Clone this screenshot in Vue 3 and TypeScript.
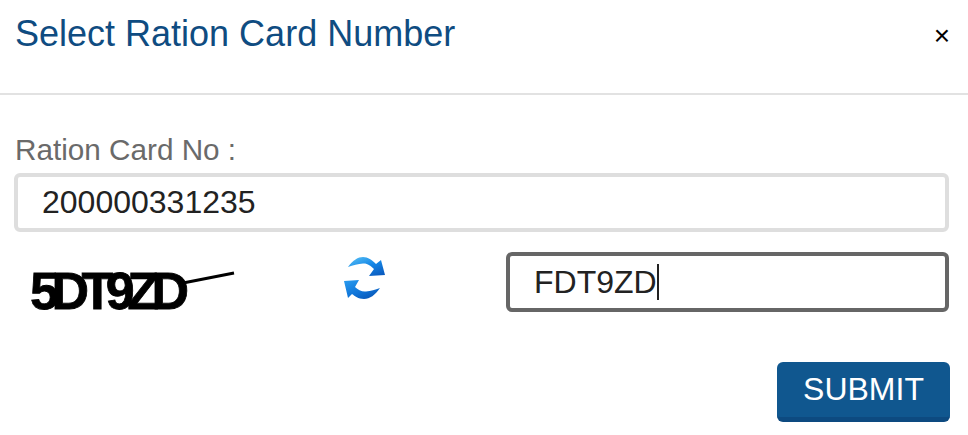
<template>
  <div class="modal">
    <header class="modal-header">
      <h4 class="modal-title">Select Ration Card Number</h4>
      <button class="close-btn" type="button">×</button>
    </header>
    <div class="modal-body">
      <label class="field-label">Ration Card No :</label>
      <div class="text-box">{{ cardNo }}</div>
      <div class="captcha-row">
        <div class="captcha">
          <span class="captcha-text">{{ captcha }}</span>
          <svg class="captcha-line" width="54" height="16" viewBox="0 0 54 16">
            <path d="M1 13 L52 3" stroke="#000" stroke-width="3" fill="none" />
          </svg>
        </div>
        <div class="refresh">
          <svg width="42" height="44" viewBox="-1 -1 42 44">
            <defs>
              <linearGradient id="arrowTop" x1="0" y1="0" x2="0.8" y2="1">
                <stop offset="0" stop-color="#5cc4f7" />
                <stop offset="0.55" stop-color="#1486e6" />
                <stop offset="1" stop-color="#0b5cc0" />
              </linearGradient>
              <linearGradient id="arrowBottom" x1="0" y1="0" x2="0.8" y2="1">
                <stop offset="0" stop-color="#2a9cef" />
                <stop offset="0.6" stop-color="#0f74d8" />
                <stop offset="1" stop-color="#0a55b4" />
              </linearGradient>
            </defs>
            <path d="M3 10 C8 3 13 0 18 0 C23 0 27 3 31 7 L36 3 L40 18 L24 19 L29 12 C26 9 22 6 18 6.5 C13 7 8 8 3 10 Z" fill="url(#arrowTop)" />
            <path d="M35 31 C30 38 25 42 19 42 C13 42 10 39 7 37 L3 41 L-1 24 L14 23 L10 30 C13 33 17 35 21 34.5 C26 34 30 33 35 31 Z" fill="url(#arrowBottom)" />
          </svg>
        </div>
        <div class="text-box focused">
          <span>{{ captchaInput }}</span><span class="caret"></span>
        </div>
      </div>
      <div class="actions">
        <button class="submit-btn" type="button">SUBMIT</button>
      </div>
    </div>
  </div>
</template>

<script setup lang="ts">
const cardNo = '200000331235'
const captcha = '5DT9ZD'
const captchaInput = 'FDT9ZD'
</script>

<style>
html,
body {
  margin: 0;
  background: #fff;
}
</style>

<style scoped>
.modal {
  width: 968px;
  height: 435px;
  font-family: "Liberation Sans", Arial, sans-serif;
  background: #fff;
  overflow: hidden;
}
.modal-header {
  display: flex;
  justify-content: space-between;
  height: 79px;
  padding: 14px 18px 0 15px;
  border-bottom: 2px solid #e2e2e2;
}
.modal-title {
  margin: 0;
  font-size: 36px;
  line-height: 40px;
  font-weight: 400;
  color: #0f4c81;
}
.close-btn {
  border: none;
  background: none;
  padding: 0;
  margin-top: 8px;
  height: 28px;
  font-family: "Liberation Sans", Arial, sans-serif;
  font-size: 28px;
  line-height: 28px;
  color: #000;
}
.modal-body {
  padding: 37px 19px 0 14px;
}
.field-label {
  display: block;
  font-size: 29.7px;
  line-height: 36px;
  color: #6a6a6a;
  margin-left: 1px;
  margin-bottom: 5px;
}
.text-box {
  display: flex;
  align-items: center;
  box-sizing: border-box;
  height: 59px;
  padding-left: 24px;
  border: 4px solid #dedede;
  border-radius: 6px;
  font-size: 32px;
  color: #222;
  background: #fff;
}
.text-box.focused {
  width: 443px;
  height: 60px;
  border-color: #666;
}
.caret {
  display: inline-block;
  width: 2px;
  height: 36px;
  background: #222;
}
.captcha-row {
  display: flex;
  align-items: center;
  margin-top: 20px;
}
.captcha {
  position: relative;
  width: 310px;
  height: 60px;
  padding: 16px 0 0 16px;
  box-sizing: border-box;
  line-height: 46px;
}
.captcha-text {
  font-size: 52px;
  line-height: 46px;
  font-weight: 700;
  letter-spacing: -7.5px;
  color: #000;
  -webkit-text-stroke: 0.8px #000;
  filter: blur(0.5px);
}
.captcha-line {
  position: absolute;
  left: 168px;
  top: 18px;
}
.refresh {
  display: flex;
  justify-content: center;
  width: 82px;
  margin-right: 100px;
  margin-top: -8px;
}
.actions {
  display: flex;
  justify-content: flex-end;
  margin-top: 50px;
  margin-right: -1px;
}
.submit-btn {
  width: 173px;
  height: 60px;
  border: none;
  border-bottom: 5px solid #0d4a80;
  border-radius: 6px;
  background: #10578f;
  color: #fff;
  font-family: "Liberation Sans", Arial, sans-serif;
  font-size: 32px;
  padding: 0;
}
</style>
